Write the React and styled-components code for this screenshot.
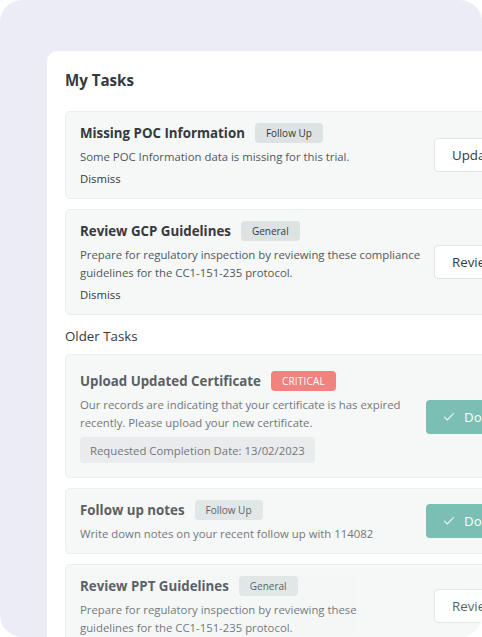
import React from "react";
import styled, { createGlobalStyle } from "styled-components";
import { Check } from "lucide-react";

const GlobalStyle = createGlobalStyle`
  body {
    margin: 0;
    background: #ffffff;
    font-family: "Open Sans", "Noto Sans", sans-serif;
  }
  * { box-sizing: border-box; }
`;

const tasks = [
  {
    title: "Missing POC Information",
    tag: "Follow Up",
    text: "Some POC Information data is missing for this trial.",
    action: "Update",
    dismiss: true,
    wrap: 350,
  },
  {
    title: "Review GCP Guidelines",
    tag: "General",
    text: "Prepare for regulatory inspection by reviewing these compliance guidelines for the CC1-151-235 protocol.",
    action: "Review",
    dismiss: true,
    wrap: 350,
  },
];

const olderTasks = [
  {
    title: "Upload Updated Certificate",
    tag: "Critical",
    critical: true,
    text: "Our records are indicating that your certificate is has expired recently. Please upload your new certificate.",
    date: "13/02/2023",
    done: true,
    wrap: 340,
  },
  {
    title: "Follow up notes",
    tag: "Follow Up",
    text: "Write down notes on your recent follow up with 114082",
    done: true,
    wrap: 340,
  },
  {
    title: "Review PPT Guidelines",
    tag: "General",
    text: "Prepare for regulatory inspection by reviewing these guidelines for the CC1-151-235 protocol.",
    action: "Review",
    wrap: 330,
  },
];

const TaskCard = ({ task, faded }) => (
  <Card $faded={faded} $roomy={!!task.date}>
    <Content>
      <TitleRow>
        <TaskTitle>{task.title}</TaskTitle>
        <Tag $critical={task.critical}>{task.tag}</Tag>
      </TitleRow>
      <Desc $max={task.wrap}>{task.text}</Desc>
      {task.date && <DatePill>Requested Completion Date: {task.date}</DatePill>}
      {task.dismiss && <Dismiss>Dismiss</Dismiss>}
    </Content>
    {task.done ? (
      <DoneButton>
        <Check size={14} strokeWidth={1.8} /> Done
      </DoneButton>
    ) : (
      <ActionButton>{task.action}</ActionButton>
    )}
  </Card>
);

const App = () => {
  return (
    <>
      <GlobalStyle />
      <Frame>
        <Panel>
          <Heading>My Tasks</Heading>
          {tasks.map((t) => (
            <TaskCard key={t.title} task={t} />
          ))}
          <SubHeading>Older Tasks</SubHeading>
          {olderTasks.map((t) => (
            <TaskCard key={t.title} task={t} faded />
          ))}
        </Panel>
      </Frame>
    </>
  );
};

const Frame = styled.div`
  width: 482px;
  height: 637px;
  border-radius: 22px;
  overflow: hidden;
  background: #ececf6;
  padding: 51px 0 0 47px;
`;

const Panel = styled.section`
  width: 504px;
  min-height: 700px;
  background: #ffffff;
  border-radius: 10px 0 0 0;
  padding: 18px 18px 40px;
`;

const Heading = styled.h2`
  margin: 0 0 20px;
  font-size: 15.1px;
  line-height: 22px;
  font-weight: 700;
  color: #343a40;
`;

const SubHeading = styled.h3`
  margin: 11px 0 8px;
  font-size: 13.3px;
  line-height: 20px;
  font-weight: 500;
  color: #343a40;
`;

const Card = styled.div`
  display: flex;
  align-items: center;
  gap: 8px;
  padding: ${(p) => (p.$roomy ? "15px 14px 14px" : "10px 14px")};
  margin-bottom: 10px;
  background: #f6f7f7;
  border: 1px solid #eceeee;
  border-radius: 5px;

  > * {
    opacity: ${(p) => (p.$faded ? 0.8 : 1)};
  }
`;

const Content = styled.div`
  flex: 1;
  min-width: 0;
  display: flex;
  flex-direction: column;
  align-items: flex-start;
`;

const TitleRow = styled.div`
  display: flex;
  align-items: center;
  gap: 10px;
  height: 21px;
`;

const TaskTitle = styled.span`
  font-size: 13.3px;
  font-weight: 700;
  color: #343a40;
`;

const Tag = styled.span`
  display: inline-flex;
  align-items: center;
  height: 20px;
  padding: 0 11px;
  border-radius: 4px;
  font-size: 10px;
  font-weight: 500;
  letter-spacing: ${(p) => (p.$critical ? "0.2px" : "0")};
  text-transform: ${(p) => (p.$critical ? "uppercase" : "none")};
  background: ${(p) => (p.$critical ? "#f26561" : "#dde2e3")};
  color: ${(p) => (p.$critical ? "#ffffff" : "#343a40")};
`;

const Desc = styled.p`
  margin: 5px 0 0;
  max-width: ${(p) => p.$max}px;
  font-size: 11.35px;
  line-height: 18px;
  color: #51575d;
`;

const DatePill = styled.div`
  margin-top: 5px;
  height: 26px;
  display: inline-flex;
  align-items: center;
  padding: 0 10px;
  border-radius: 4px;
  background: #e6e9ea;
  font-size: 11.35px;
  color: #51575d;
`;

const Dismiss = styled.span`
  margin-top: 4px;
  font-size: 11.35px;
  line-height: 18px;
  color: #343a40;
  cursor: pointer;
`;

const ActionButton = styled.button`
  flex-shrink: 0;
  height: 34px;
  min-width: 84px;
  padding: 0 17px;
  border: 1px solid #dfe3e6;
  border-radius: 4px;
  background: #ffffff;
  font-family: inherit;
  font-size: 13.3px;
  color: #343a40;
  text-align: left;
`;

const DoneButton = styled.button`
  flex-shrink: 0;
  display: inline-flex;
  align-items: center;
  gap: 8px;
  height: 34px;
  min-width: 92px;
  padding: 0 16px;
  border: none;
  border-radius: 4px;
  background: #5cb1a4;
  font-family: inherit;
  font-size: 13.3px;
  color: #ffffff;
`;

export default App;
